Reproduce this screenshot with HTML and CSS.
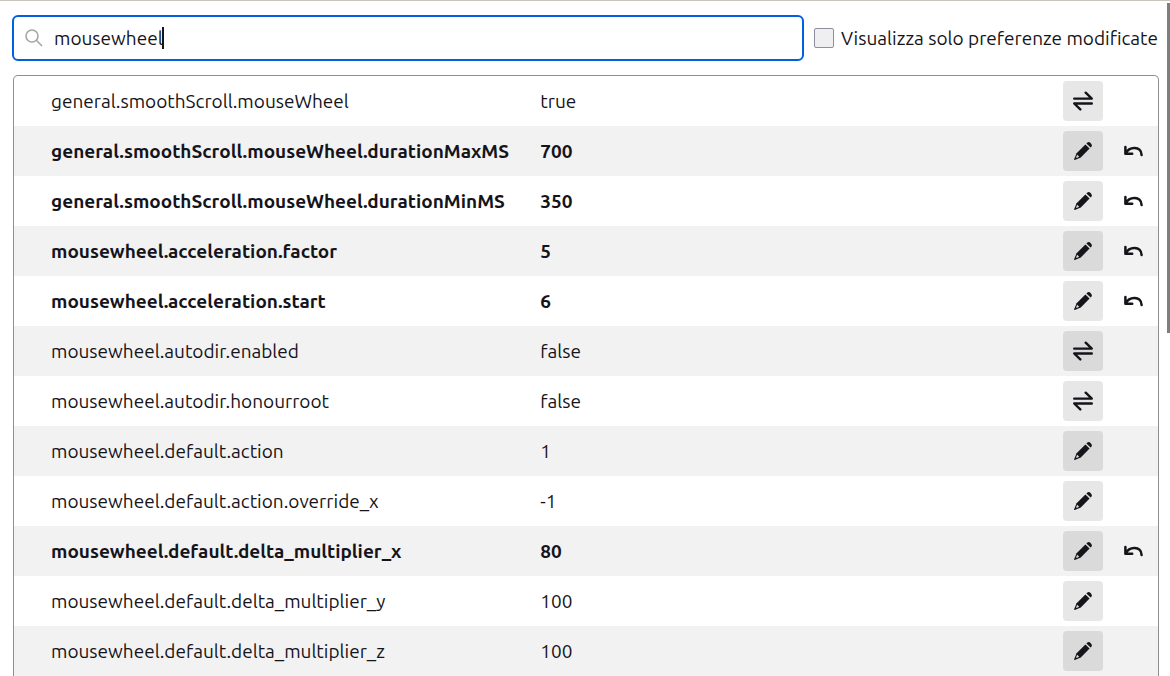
FILE: index.html
```html
<!DOCTYPE html>
<html lang="it">
<head>
<meta charset="utf-8">
<meta name="viewport" content="width=device-width, initial-scale=1">
<title>about:config</title>
<link rel="stylesheet" href="styles.css">
</head>
<body>
<svg class="sprites" aria-hidden="true">
  <symbol id="toggle" viewBox="0 0 20 20"><path d="M1.2 7.6H18.8L12.7 1.7M18.8 12.5H1.2L7.3 18.4" fill="none" stroke="currentColor" stroke-width="2.4" stroke-linecap="round" stroke-linejoin="round"/></symbol>
  <symbol id="edit" viewBox="0 0 20 20"><path d="M12.4 3.4L16.6 7.6L7.8 16.4L1.8 19Q1 19.1 1.1 18.3L3.6 12.2Z" fill="currentColor"/><path d="M13.4 2.4L14.4 1.4Q16 .4 17.8 2.2Q19.6 4 18.6 5.6L17.6 6.6Z" fill="currentColor"/><path class="tip" d="M4.2 13.8L6.2 15.8L3.7 16.9L3.1 16.3Z"/></symbol>
  <symbol id="reset" viewBox="0 0 20 20"><path d="M2.4 6V12.8H9.2M2.7 12.5C6 5.2 18.3 4.4 18.6 14" fill="none" stroke="currentColor" stroke-width="2.5" stroke-linecap="round" stroke-linejoin="round"/></symbol>
</svg>
<header class="toolbar">
  <div class="search">
    <svg class="search-icon" viewBox="0 0 18 18" aria-hidden="true"><circle cx="7" cy="7" r="6"/><path d="M11.3 11.3L17 17"/></svg>
    <input class="search-input" type="text" aria-label="Cerca" value="mousewheel" autofocus>
    <span class="caret"></span>
  </div>
  <label class="filter"><input class="filter-box" type="checkbox">Visualizza solo preferenze modificate</label>
</header>
<main class="panel">
<table class="prefs">
<colgroup><col class="col-name"><col><col class="col-button"><col class="col-button"></colgroup>
<tbody>
<tr><th scope="row">general.smoothScroll.mouseWheel</th><td>true</td><td class="cell"><button class="button" aria-label="Inverti"><svg class="icon"><use href="#toggle"/></svg></button></td><td class="cell"></td></tr>
<tr class="changed"><th scope="row">general.smoothScroll.mouseWheel.durationMaxMS</th><td>700</td><td class="cell"><button class="button" aria-label="Modifica"><svg class="icon"><use href="#edit"/></svg></button></td><td class="cell"><button class="button ghost" aria-label="Ripristina"><svg class="icon"><use href="#reset"/></svg></button></td></tr>
<tr class="changed"><th scope="row">general.smoothScroll.mouseWheel.durationMinMS</th><td>350</td><td class="cell"><button class="button" aria-label="Modifica"><svg class="icon"><use href="#edit"/></svg></button></td><td class="cell"><button class="button ghost" aria-label="Ripristina"><svg class="icon"><use href="#reset"/></svg></button></td></tr>
<tr class="changed"><th scope="row">mousewheel.acceleration.factor</th><td>5</td><td class="cell"><button class="button" aria-label="Modifica"><svg class="icon"><use href="#edit"/></svg></button></td><td class="cell"><button class="button ghost" aria-label="Ripristina"><svg class="icon"><use href="#reset"/></svg></button></td></tr>
<tr class="changed"><th scope="row">mousewheel.acceleration.start</th><td>6</td><td class="cell"><button class="button" aria-label="Modifica"><svg class="icon"><use href="#edit"/></svg></button></td><td class="cell"><button class="button ghost" aria-label="Ripristina"><svg class="icon"><use href="#reset"/></svg></button></td></tr>
<tr><th scope="row">mousewheel.autodir.enabled</th><td>false</td><td class="cell"><button class="button" aria-label="Inverti"><svg class="icon"><use href="#toggle"/></svg></button></td><td class="cell"></td></tr>
<tr><th scope="row">mousewheel.autodir.honourroot</th><td>false</td><td class="cell"><button class="button" aria-label="Inverti"><svg class="icon"><use href="#toggle"/></svg></button></td><td class="cell"></td></tr>
<tr><th scope="row">mousewheel.default.action</th><td>1</td><td class="cell"><button class="button" aria-label="Modifica"><svg class="icon"><use href="#edit"/></svg></button></td><td class="cell"></td></tr>
<tr><th scope="row">mousewheel.default.action.override_x</th><td>-1</td><td class="cell"><button class="button" aria-label="Modifica"><svg class="icon"><use href="#edit"/></svg></button></td><td class="cell"></td></tr>
<tr class="changed"><th scope="row">mousewheel.default.delta_multiplier_x</th><td>80</td><td class="cell"><button class="button" aria-label="Modifica"><svg class="icon"><use href="#edit"/></svg></button></td><td class="cell"><button class="button ghost" aria-label="Ripristina"><svg class="icon"><use href="#reset"/></svg></button></td></tr>
<tr><th scope="row">mousewheel.default.delta_multiplier_y</th><td>100</td><td class="cell"><button class="button" aria-label="Modifica"><svg class="icon"><use href="#edit"/></svg></button></td><td class="cell"></td></tr>
<tr><th scope="row">mousewheel.default.delta_multiplier_z</th><td>100</td><td class="cell"><button class="button" aria-label="Modifica"><svg class="icon"><use href="#edit"/></svg></button></td><td class="cell"></td></tr>
</tbody>
</table>
</main>
<div class="scroll-thumb"></div>
</body>
</html>
```
FILE: styles.css
```css
* { box-sizing: border-box; }
body {
  margin: 0;
  border-top: 1px solid #c8c4bd;
  background: #fff;
  color: #15141a;
  font: 19px/24px Ubuntu, "Noto Sans", sans-serif;
}
.sprites { position: absolute; width: 0; height: 0; }
.toolbar {
  display: flex;
  align-items: center;
  gap: 10px;
  padding: 14px 12px;
}
.search {
  position: relative;
  display: flex;
  flex: 1;
  align-items: center;
  gap: 11px;
  height: 46px;
  padding: 0 11px;
  border: 2px solid #0060df;
  border-radius: 6px;
}
.search-icon {
  width: 18px;
  height: 18px;
  fill: none;
  stroke: #a5a5a6;
  stroke-width: 1.6;
}
.search-input {
  flex: 1;
  min-width: 0;
  padding: 0;
  border: 0;
  outline: 0;
  background: none;
  color: inherit;
  font: inherit;
  caret-color: transparent;
}
.caret {
  position: absolute;
  top: 10px;
  left: 148px;
  width: 2px;
  height: 22px;
  background: #15141a;
}
.filter {
  display: flex;
  align-items: center;
  gap: 7px;
  white-space: nowrap;
}
.filter-box {
  appearance: none;
  width: 20px;
  height: 20px;
  margin: 0;
  border: 1px solid #8f8f9d;
  border-radius: 2px;
  background: #efeff1;
}
.panel {
  margin: 0 11px 0 13px;
  border: 1px solid #8f8f91;
  border-bottom: 0;
  border-radius: 5px 5px 0 0;
}
.prefs {
  width: 100%;
  table-layout: fixed;
  border-collapse: collapse;
}
.col-name { width: 46%; }
.col-button { width: 50px; }
.prefs tr { height: 50px; }
.prefs tr:nth-child(even) { background: #f2f2f2; }
.prefs th {
  padding: 0 0 0 37px;
  font-weight: 400;
  text-align: left;
  white-space: nowrap;
}
.prefs td { padding: 0; }
.prefs .changed th, .prefs .changed td { font-weight: 700; }
.prefs .cell { padding: 5px; }
.button {
  display: grid;
  place-items: center;
  width: 40px;
  height: 40px;
  padding: 0;
  border: 0;
  border-radius: 4px;
  background: #e7e7e7;
  color: #15141a;
}
.prefs tr:nth-child(even) .button { background: #dadada; }
.prefs tr .button.ghost { background: none; }
.icon { width: 20px; height: 20px; }
.tip { fill: #dadada; }
.scroll-thumb {
  position: absolute;
  top: 3px;
  right: 0;
  width: 3px;
  height: 330px;
  background: #7d7f7d;
}
```
